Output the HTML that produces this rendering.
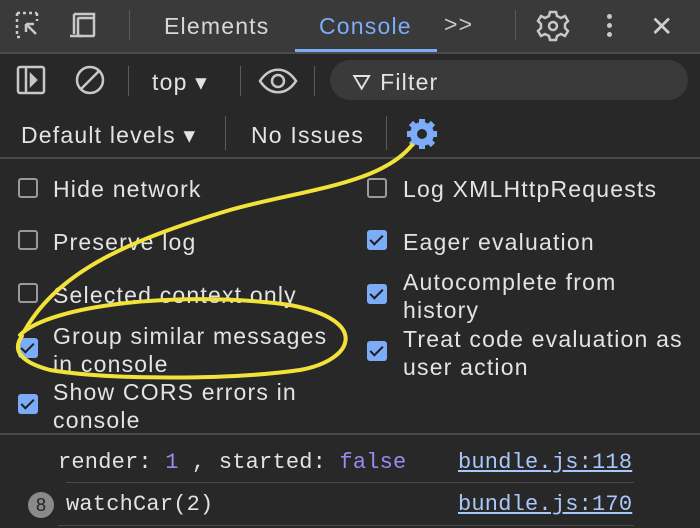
<!DOCTYPE html><html><head><style>
body{margin:0;width:700px;height:528px;background:#282828;font-family:"Liberation Sans",sans-serif;color:#e3e3e3;position:relative;overflow:hidden}
.a{position:absolute}
.t{font-size:23px;letter-spacing:1.2px;white-space:nowrap}
.cb{position:absolute;width:20px;height:20px;border-radius:3px;box-sizing:border-box}
.off{border:2px solid #9a9a9a}
.on{background:#7cacf8}
.on:after{content:"";position:absolute;left:6px;top:2px;width:5px;height:11px;border:solid #1f1f1f;border-width:0 2.5px 2.5px 0;transform:rotate(45deg)}
.sep{position:absolute;width:1px;background:#5a5a5a}
.mono{font-family:"Liberation Mono",monospace;font-size:22px;letter-spacing:0.2px}
</style></head><body>
<div class="a" style="left:0;top:0;width:700px;height:52px;background:#3a3a3a"></div>
<div class="a" style="left:0;top:52px;width:700px;height:2px;background:#4a4a4a"></div>
<div class="a" style="left:295px;top:49px;width:142px;height:3px;background:#7cacf8"></div>
<svg class="a" style="left:14px;top:10px" width="100" height="32" fill="none" stroke="#c8c8c8" stroke-width="2.5">
<path d="M3 3h20M3 3v24M3 27h6M23 3v8" stroke-dasharray="3 3"/><path d="M12 14l10 10M12 14h8M12 14v8"/>
<rect x="64" y="8" width="16" height="18" rx="1"/><path d="M60 4h20v4M60 4v20M56 26h12"/></svg>
<div class="sep" style="left:129px;top:10px;height:30px"></div>
<div class="a t" style="left:164px;top:13px;color:#d8d8d8">Elements</div>
<div class="a t" style="left:319px;top:13px;color:#7cacf8">Console</div>
<div class="a t" style="left:444px;top:11px;color:#c8c8c8">&gt;&gt;</div>
<div class="sep" style="left:515px;top:10px;height:30px"></div>
<svg class="a" style="left:536px;top:9px" width="34" height="34" fill="none" stroke="#c8c8c8" stroke-width="2.5"><circle cx="17" cy="17" r="4"/><path d="M14 3h6l1 4 4 2 4-2 3 5-3 3v4l3 3-3 5-4-2-4 2-1 4h-6l-1-4-4-2-4 2-3-5 3-3v-4l-3-3 3-5 4 2 4-2z"/></svg>
<div class="a" style="left:607px;top:14px;width:5px;height:5px;border-radius:3px;background:#c8c8c8;box-shadow:0 9px 0 #c8c8c8,0 18px 0 #c8c8c8"></div>
<div class="a t" style="left:650px;top:10px;font-size:28px;color:#d0d0d0">✕</div>
<svg class="a" style="left:16px;top:64px" width="90" height="32" fill="none" stroke="#c8c8c8" stroke-width="2.5"><rect x="2" y="3" width="26" height="26" rx="2"/><path d="M10 3v26"/><path d="M15 11l5 5-5 5z" fill="#c8c8c8"/><circle cx="74" cy="16" r="13"/><path d="M65 25l18-18"/></svg>
<div class="sep" style="left:128px;top:66px;height:30px"></div>
<div class="a t" style="left:152px;top:69px">top ▾</div>
<div class="sep" style="left:240px;top:66px;height:30px"></div>
<svg class="a" style="left:258px;top:66px" width="40" height="30" fill="none" stroke="#c8c8c8" stroke-width="2.5"><path d="M2 15c10-15 26-15 36 0c-10 15-26 15-36 0z"/><circle cx="20" cy="15" r="6"/></svg>
<div class="sep" style="left:314px;top:66px;height:30px"></div>
<div class="a" style="left:330px;top:60px;width:358px;height:40px;border-radius:20px;background:#3a3a3a"></div>
<div class="a t" style="left:352px;top:69px">⛛ Filter</div>
<div class="a t" style="left:21px;top:122px">Default levels ▾</div>
<div class="sep" style="left:225px;top:116px;height:34px"></div>
<div class="a t" style="left:251px;top:122px">No Issues</div>
<div class="sep" style="left:386px;top:116px;height:34px"></div>
<svg class="a" style="left:405px;top:117px" width="34" height="34"><circle cx="17" cy="17" r="12" fill="#7cacf8"/><g stroke="#7cacf8" stroke-width="6"><path d="M17 2v30M2 17h30M6 6l22 22M28 6L6 28"/></g><circle cx="17" cy="17" r="5" fill="#282828"/></svg>
<div class="a" style="left:0;top:157px;width:700px;height:2px;background:#4a4a4a"></div>
<div class="cb off" style="left:18px;top:178px"></div><div class="a t" style="left:53px;top:176px">Hide network</div>
<div class="cb off" style="left:18px;top:230px"></div><div class="a t" style="left:53px;top:229px">Preserve log</div>
<div class="cb off" style="left:18px;top:283px"></div><div class="a t" style="left:53px;top:282px">Selected context only</div>
<div class="cb on" style="left:18px;top:338px"></div><div class="a t" style="left:53px;top:322px;line-height:28px">Group similar messages<br>in console</div>
<div class="cb on" style="left:18px;top:394px"></div><div class="a t" style="left:53px;top:378px;line-height:28px">Show CORS errors in<br>console</div>
<div class="cb off" style="left:367px;top:178px"></div><div class="a t" style="left:403px;top:176px">Log XMLHttpRequests</div>
<div class="cb on" style="left:367px;top:230px"></div><div class="a t" style="left:403px;top:229px">Eager evaluation</div>
<div class="cb on" style="left:367px;top:284px"></div><div class="a t" style="left:403px;top:268px;line-height:28px">Autocomplete from<br>history</div>
<div class="cb on" style="left:367px;top:341px"></div><div class="a t" style="left:403px;top:325px;line-height:28px">Treat code evaluation as<br>user action</div>
<div class="a" style="left:0;top:433px;width:700px;height:2px;background:#4a4a4a"></div>
<div class="a mono" style="left:58px;top:450px">render: <span style="color:#9a8aef">1</span> , started: <span style="color:#9a8aef">false</span></div>
<div class="a mono" style="left:458px;top:450px;color:#a8c7fa;text-decoration:underline">bundle.js:118</div>
<div class="a" style="left:66px;top:482px;width:568px;height:1px;background:#4a4a4a"></div>
<div class="a" style="left:28px;top:492px;width:26px;height:26px;border-radius:13px;background:#8a8a8a;color:#222;font-size:18px;text-align:center;line-height:26px">8</div>
<div class="a mono" style="left:66px;top:492px">watchCar(2)</div>
<div class="a mono" style="left:458px;top:492px;color:#a8c7fa;text-decoration:underline">bundle.js:170</div>
<div class="a" style="left:58px;top:525px;width:576px;height:1px;background:#4a4a4a"></div>
<svg class="a" style="left:0;top:0" width="700" height="528" fill="none" stroke="#f2e23a" stroke-width="4" stroke-linecap="round">
<path d="M412 145C380 185 300 190 230 210C130 240 60 270 25 330"/>
<path d="M20 335C50 305 180 290 290 305C370 320 355 360 300 370C230 380 110 380 50 370C20 362 12 350 22 336"/>
</svg>
</body></html>
